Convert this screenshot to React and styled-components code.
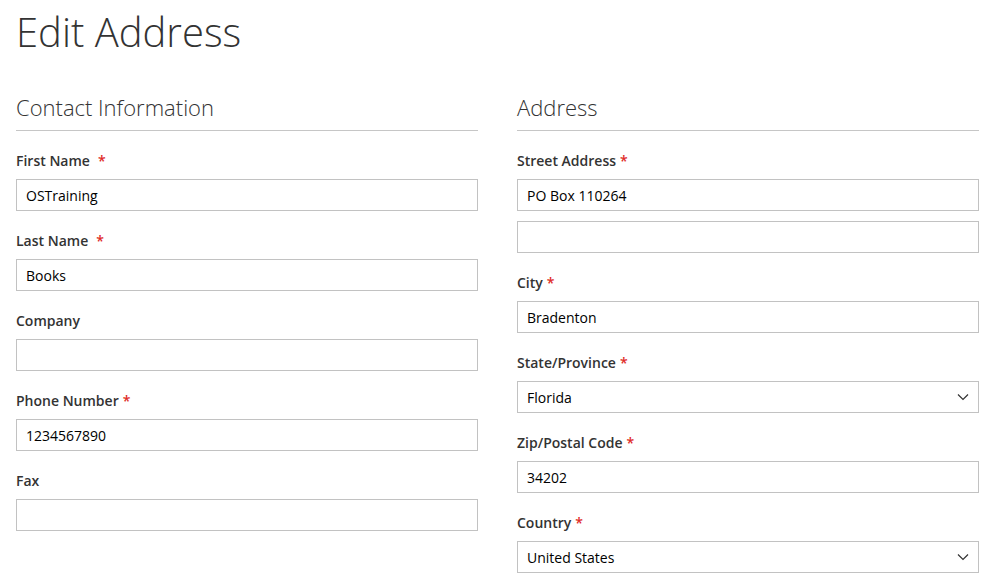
import React from "react";
import styled, { createGlobalStyle } from "styled-components";

const Global = createGlobalStyle`
  html, body { margin: 0; padding: 0; background: #fff; }
  body { font-family: "Open Sans", "Liberation Sans", sans-serif; color: #333; }
  * { box-sizing: border-box; }
`;

const Page = styled.div`
  padding: 8px 16px 0 16px;
`;

const Title = styled.h1`
  margin: 0;
  font-size: 40px;
  line-height: 48px;
  font-weight: 300;
  color: #333;
`;

const Columns = styled.div`
  display: grid;
  grid-template-columns: 1fr 1fr;
  column-gap: 39px;
  margin-top: 36px;
`;

const Fieldset = styled.div`
  display: flex;
  flex-direction: column;
`;

const Legend = styled.div`
  font-size: 22px;
  line-height: 31px;
  font-weight: 300;
  padding-bottom: 7px;
  border-bottom: 1px solid #c6c6c6;
  margin-bottom: 20px;
`;

const Field = styled.div`
  display: flex;
  flex-direction: column;
  margin-bottom: 20px;
`;

const Label = styled.label`
  font-size: 14px;
  line-height: 20px;
  font-weight: 600;
  margin-bottom: 8px;
  color: #333;
`;

const Star = styled.span`
  color: #e02b27;
  margin-left: ${(p) => p.$gap || 4}px;
`;

const Input = styled.div`
  height: 32px;
  border: 1px solid #c2c2c2;
  background: #fff;
  padding: 0 9px;
  display: flex;
  align-items: center;
  justify-content: space-between;
  font-size: 14px;
  color: #000;
  & + & { margin-top: 10px; }
`;

const Chevron = () => (
  <svg width="12" height="8" viewBox="0 0 12 8">
    <polyline points="1,1.5 6,6.5 11,1.5" fill="none" stroke="#333" strokeWidth="1.2" />
  </svg>
);

function F({ label, req, gap, values, select }) {
  return (
    <Field>
      <Label>
        {label}
        {req && <Star $gap={gap}>*</Star>}
      </Label>
      {values.map((v, i) => (
        <Input key={i}>
          <span>{v}</span>
          {select && <Chevron />}
        </Input>
      ))}
    </Field>
  );
}

export default function App() {
  return (
    <>
      <Global />
      <Page>
        <Title>Edit Address</Title>
        <Columns>
          <Fieldset>
            <Legend>Contact Information</Legend>
            <F label="First Name" req gap={8} values={["OSTraining"]} />
            <F label="Last Name" req gap={8} values={["Books"]} />
            <F label="Company" values={[""]} />
            <F label="Phone Number" req values={["1234567890"]} />
            <F label="Fax" values={[""]} />
          </Fieldset>
          <Fieldset>
            <Legend>Address</Legend>
            <F label="Street Address" req values={["PO Box 110264", ""]} />
            <F label="City" req values={["Bradenton"]} />
            <F label="State/Province" req values={["Florida"]} select />
            <F label="Zip/Postal Code" req values={["34202"]} />
            <F label="Country" req values={["United States"]} select />
          </Fieldset>
        </Columns>
      </Page>
    </>
  );
}
